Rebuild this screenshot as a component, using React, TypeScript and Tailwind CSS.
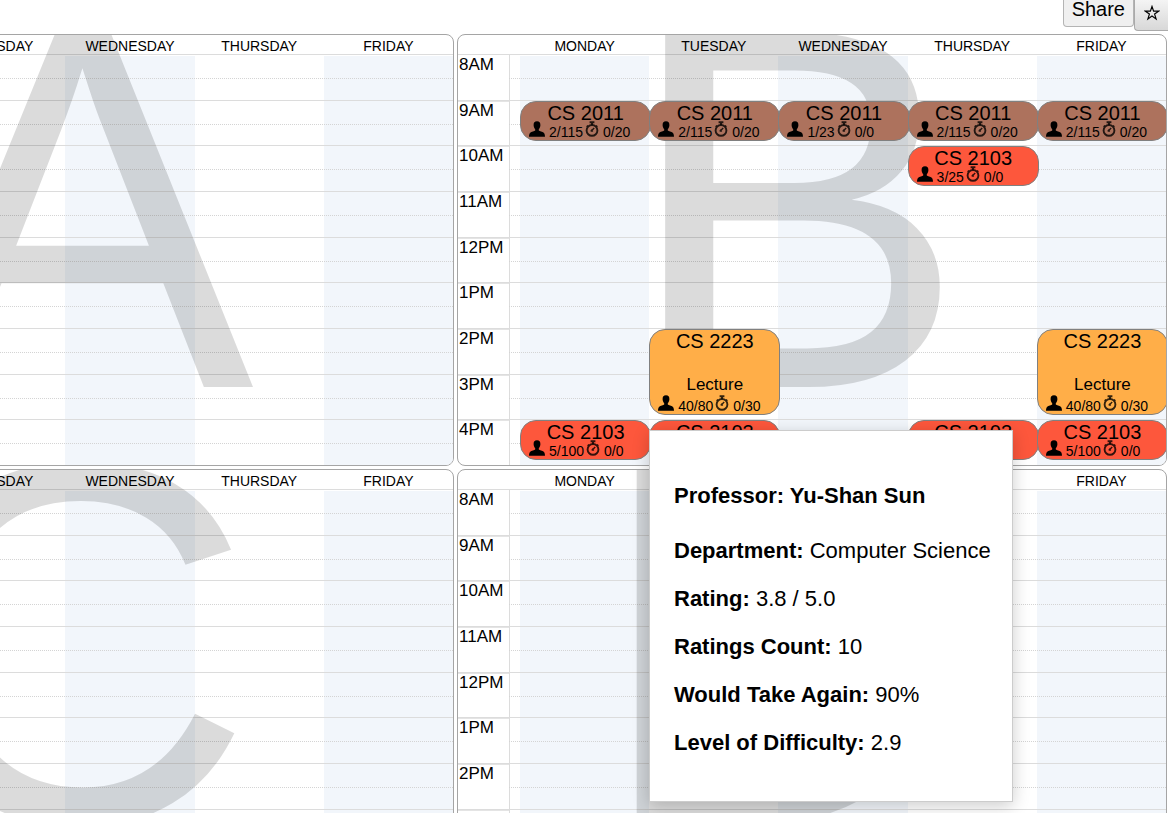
import React from "react";

const DAYS = ["MONDAY", "TUESDAY", "WEDNESDAY", "THURSDAY", "FRIDAY"];
const HOURS = ["8AM", "9AM", "10AM", "11AM", "12PM", "1PM", "2PM", "3PM", "4PM"];
const FIRST_HOUR = 8;

type Meeting = {
  course: string;
  day: number;
  start: number;
  minutes: number;
  seats: string;
  waitlist: string;
  kind?: string;
  tone: "brown" | "red" | "orange";
};

const TONES = {
  brown: "bg-[#ad725d]",
  red: "bg-[#fd573c]",
  orange: "bg-[#ffae48]",
};

const TERM_B: Meeting[] = [
  { course: "CS 2011", day: 0, start: 9, minutes: 50, seats: "2/115", waitlist: "0/20", tone: "brown" },
  { course: "CS 2103", day: 0, start: 16, minutes: 50, seats: "5/100", waitlist: "0/0", tone: "red" },
  { course: "CS 2011", day: 1, start: 9, minutes: 50, seats: "2/115", waitlist: "0/20", tone: "brown" },
  { course: "CS 2223", day: 1, start: 14, minutes: 110, seats: "40/80", waitlist: "0/30", kind: "Lecture", tone: "orange" },
  { course: "CS 2103", day: 1, start: 16, minutes: 50, seats: "5/100", waitlist: "0/0", tone: "red" },
  { course: "CS 2011", day: 2, start: 9, minutes: 50, seats: "1/23", waitlist: "0/0", tone: "brown" },
  { course: "CS 2011", day: 3, start: 9, minutes: 50, seats: "2/115", waitlist: "0/20", tone: "brown" },
  { course: "CS 2103", day: 3, start: 10, minutes: 50, seats: "3/25", waitlist: "0/0", tone: "red" },
  { course: "CS 2103", day: 3, start: 16, minutes: 50, seats: "5/100", waitlist: "0/0", tone: "red" },
  { course: "CS 2011", day: 4, start: 9, minutes: 50, seats: "2/115", waitlist: "0/20", tone: "brown" },
  { course: "CS 2223", day: 4, start: 14, minutes: 110, seats: "40/80", waitlist: "0/30", kind: "Lecture", tone: "orange" },
  { course: "CS 2103", day: 4, start: 16, minutes: 50, seats: "5/100", waitlist: "0/0", tone: "red" },
];

function PersonIcon() {
  return (
    <svg viewBox="0 0 16 16" className="h-4 w-4 shrink-0" aria-hidden="true">
      <path
        d="M8 0.2C5.6 0.2 4.5 1.8 4.6 4.2C4.7 6 5.4 7.300 6.200 8.200V9.600C5.600 10.600 2.400 10.700 1.200 11.700C0.300 12.500 0.100 13.900 0 15.800H16C15.900 13.900 15.700 12.500 14.800 11.700C13.600 10.700 10.400 10.600 9.800 9.600V8.200C10.600 7.300 11.300 6 11.400 4.200C11.500 1.800 10.400 0.200 8 0.200Z"
        fill="#000"
      />
    </svg>
  );
}

function StopwatchIcon() {
  return (
    <svg viewBox="0 0 14 16" className="ml-0.5 h-4 w-3.5 shrink-0" fill="none" stroke="#000" strokeOpacity="0.8" aria-hidden="true">
      <circle cx="7" cy="9.400" r="5.400" strokeWidth="1.900" />
      <path d="M4.600 1.200h4.800M7 2.200v1.600" strokeWidth="2" />
      <path d="M11 4.400l1.500 1.300M3 4.400L1.500 5.700" strokeWidth="1.200" />
      <path d="M5.800 10.600L9.200 7M6 8.800l1.800 1.600" strokeWidth="1.400" />
    </svg>
  );
}

function MeetingCard({ meeting }: { meeting: Meeting }) {
  const span = HOURS.length * 60;
  const top = ((meeting.start - FIRST_HOUR) * 60 * 100) / span;
  const height = (meeting.minutes * 100) / span;
  return (
    <div
      className={`absolute left-0 -right-0.5 mt-px box-content flex flex-col justify-between overflow-hidden rounded-2xl border border-[#808080] ${TONES[meeting.tone]}`}
      style={{ top: `${top}%`, height: `${height}%` }}
    >
      <p className="h-[19px] text-center text-xl leading-[22px]">{meeting.course}</p>
      <div>
        {meeting.kind && <p className="text-center text-[17px] leading-5">{meeting.kind}</p>}
        <div className="flex h-[19px] items-start pl-2 text-sm leading-[22px]">
          <PersonIcon />
          <span className="ml-1">{meeting.seats}</span>
          <StopwatchIcon />
          <span className="ml-1">{meeting.waitlist}</span>
        </div>
      </div>
    </div>
  );
}

function TermPanel({ term, meetings = [] }: { term: string; meetings?: Meeting[] }) {
  return (
    <section className="relative w-[710px] shrink-0 overflow-hidden rounded-lg border border-[#a5a5a5]" aria-label={`${term} term`}>
      <div className="flex h-5 border-b border-[#dcdcdc] pl-[62px]">
        {DAYS.map((day) => (
          <div key={day} className="flex-1 text-center text-sm leading-[22px]">
            {day}
          </div>
        ))}
      </div>
      <div className="relative flex h-[410px]">
        <div className="flex w-[52px] flex-col border-r border-[#dcdcdc]">
          {HOURS.map((hour) => (
            <div key={hour} className="flex-1 border-b border-[#dcdcdc] pl-px text-[17px] leading-[19px] shadow-[0_1px_0_#e4e4e4] last:border-b-0">
              {hour}
            </div>
          ))}
        </div>
        <div className="w-2.5" />
        <div className="flex flex-1 pt-px">
          {DAYS.map((day) => (
            <div key={day} className="flex-1 odd:bg-[#f2f6fb]" />
          ))}
        </div>
        <div className="pointer-events-none absolute inset-y-0 right-0 left-[51px] flex flex-col">
          {HOURS.map((hour) => (
            <div key={hour} className="flex flex-1 flex-col border-b border-[#dcdcdc] last:border-b-0">
              <div className="h-6 border-b border-dotted border-[#d4d4d4]" />
            </div>
          ))}
        </div>
      </div>
      <div
        className="pointer-events-none absolute right-[199px] bottom-[85px] flex h-0 items-center text-[516px] leading-none text-black/14"
        aria-hidden="true"
      >
        <span className="pb-[344px]">{term}</span>
      </div>
      <div className="absolute inset-x-0 bottom-0 flex h-[411px] pl-[62px]">
        {DAYS.map((day, index) => (
          <div key={day} className="relative flex-1">
            {meetings
              .filter((meeting) => meeting.day === index)
              .map((meeting) => (
                <MeetingCard key={meeting.start} meeting={meeting} />
              ))}
          </div>
        ))}
      </div>
    </section>
  );
}

const FACTS = [
  ["Department:", "Computer Science"],
  ["Rating:", "3.8 / 5.0"],
  ["Ratings Count:", "10"],
  ["Would Take Again:", "90%"],
  ["Level of Difficulty:", "2.9"],
];

function ProfessorTooltip() {
  return (
    <aside
      role="tooltip"
      className="absolute top-[430px] left-[649px] flex w-[364px] flex-col gap-[22px] border border-[#cccccc] bg-white px-6 pt-[52px] pb-[45px] text-[22px] leading-[26px] shadow-[0_4px_16px_rgba(0,0,0,0.2)]"
    >
      <h2 className="mb-[7px] font-bold">Professor: Yu-Shan Sun</h2>
      {FACTS.map(([label, value]) => (
        <p key={label} className="whitespace-nowrap">
          <strong>{label}</strong> {value}
        </p>
      ))}
    </aside>
  );
}

export default function App() {
  return (
    <main className="relative h-screen overflow-hidden bg-white font-['Liberation_Sans',Arial,sans-serif] text-black">
      <header className="flex h-[34px] items-start justify-end">
        <button className="h-[27px] rounded-b border border-t-0 border-[#b4b4b4] bg-[#f0f0f0] px-2 pb-2 text-xl leading-[18px]">
          Share
        </button>
        <button
          className="flex h-[31px] w-[34px] items-center justify-center rounded-bl border-b border-l border-[#aaaaaa] bg-linear-to-b from-[#f4f4f4] to-[#d8d8d8]"
          aria-label="Favorite"
        >
          <svg viewBox="0 0 16 16" className="mb-1 h-4 w-4" fill="none" stroke="#000" strokeWidth="1.200" aria-hidden="true">
            <path d="M8 1.500l1.600 4.700h5L10.600 9.100l1.500 4.800L8 11l-4.100 2.900 1.500-4.800L1.400 6.200h5z" />
          </svg>
        </button>
      </header>
      <div className="flex flex-col gap-[3px]">
        <div className="flex justify-end gap-[3px] pr-px">
          <TermPanel term="A" />
          <TermPanel term="B" meetings={TERM_B} />
        </div>
        <div className="flex justify-end gap-[3px] pr-px">
          <TermPanel term="C" />
          <TermPanel term="D" />
        </div>
      </div>
      <ProfessorTooltip />
    </main>
  );
}
